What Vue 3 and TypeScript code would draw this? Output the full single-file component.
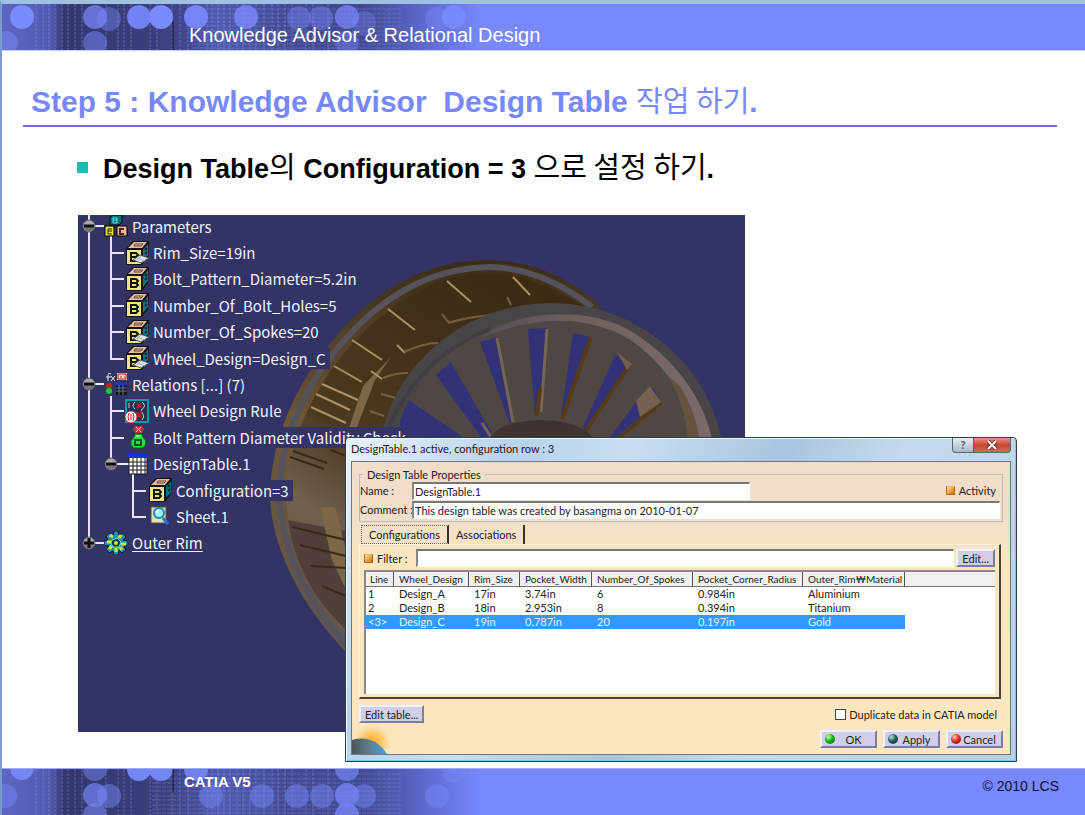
<script setup lang="ts">
import { ref } from 'vue'

type IconKind = 'params' | 'box' | 'boxTable' | 'relations' | 'rule' | 'check' | 'table' | 'sheet' | 'gear'
interface TreeItem {
  label: string
  icon: IconKind
  level: 0 | 1 | 2
  node?: 'minus' | 'plus'
  link?: boolean
}

const tree: TreeItem[] = [
  { label: 'Parameters', icon: 'params', level: 0, node: 'minus' },
  { label: 'Rim_Size=19in', icon: 'boxTable', level: 1 },
  { label: 'Bolt_Pattern_Diameter=5.2in', icon: 'box', level: 1 },
  { label: 'Number_Of_Bolt_Holes=5', icon: 'box', level: 1 },
  { label: 'Number_Of_Spokes=20', icon: 'boxTable', level: 1 },
  { label: 'Wheel_Design=Design_C', icon: 'boxTable', level: 1 },
  { label: 'Relations [...] (7)', icon: 'relations', level: 0, node: 'minus' },
  { label: 'Wheel Design Rule', icon: 'rule', level: 1 },
  { label: 'Bolt Pattern Diameter Validity Check', icon: 'check', level: 1 },
  { label: 'DesignTable.1', icon: 'table', level: 1, node: 'minus' },
  { label: 'Configuration=3', icon: 'box', level: 2 },
  { label: 'Sheet.1', icon: 'sheet', level: 2 },
  { label: 'Outer Rim', icon: 'gear', level: 0, node: 'plus', link: true },
]

const columns = ['Line', 'Wheel_Design', 'Rim_Size', 'Pocket_Width', 'Number_Of_Spokes', 'Pocket_Corner_Radius', 'Outer_Rim₩Material']
const rows = [
  ['1', 'Design_A', '17in', '3.74in', '6', '0.984in', 'Aluminium'],
  ['2', 'Design_B', '18in', '2.953in', '8', '0.394in', 'Titanium'],
  ['<3>', 'Design_C', '19in', '0.787in', '20', '0.197in', 'Gold'],
]
const selected = ref(2)
const name = ref('DesignTable.1')
const comment = ref('This design table was created by basangma on 2010-01-07')
const filter = ref('')
const active = ref(true)
const filterOn = ref(true)
const duplicate = ref(false)

const topDots = [[20, 13, 1], [93, 13, 0.7], [137, 13, 0.9], [159, 13, 1], [194, 13, 0.9], [244, 13, 0.8], [297, 14, 0.4], [319, 14, 0.4], [345, 13, 0.7], [452, 13, 0.9], [93, 39, 0.5], [4, 39, 0.5], [107, 15, 0.4], [362, 19, 0.3], [345, 39, 0.4], [435, 15, 0.4]]
const bottomDots = [[20, -1, 1], [93, 0, 0.5], [137, 0, 1], [159, 0, 1], [194, 0, 0.9], [345, 0, 0.7], [452, 2, 0.5], [93, 26, 0.7], [107, 27, 0.5], [3, 27, 0.5], [209, 27, 0.5], [260, 27, 0.5], [295, 27, 0.5], [320, 27, 0.5], [345, 26, 0.8], [362, 27, 0.5], [93, 46, 0.6], [345, 46, 0.8], [435, 27, 0.5]]
const gridX = [34, 41, 47, 53, 60, 66, 73, 80, 104, 116, 122, 129, 148, 155, 170, 178, 186, 205, 210, 216, 222, 228, 235, 241, 248, 254, 262, 270, 276, 283, 290, 304, 311, 326]
const gridY = [5, 10, 14, 18, 22, 27, 31, 36, 40, 44]

const spokeGaps = [
  '400,420 409,400 467,440 401,440', '436,375 451,362 496,440 483,440', '480,342 497,337 513,422 510,424',
  '528,329 547,328 539,412 535,416', '573,333 591,337 563,418 561,415', '615,355 631,364 586,432 583,427',
  '636,402 653,387 661,403 617,440 608,440',
]
</script>

<template>
  <div class="slide">
    <header class="bar top">
      <svg class="pattern" width="480" height="46" aria-hidden="true">
        <defs>
          <linearGradient id="fade">
            <stop offset="0" stop-color="#5c66c4" /><stop offset="0.1" stop-color="#535bb0" /><stop offset="0.13" stop-color="#33376c" />
            <stop offset="0.35" stop-color="#3c4180" /><stop offset="0.45" stop-color="#5059ac" /><stop offset="0.6" stop-color="#434990" />
            <stop offset="0.75" stop-color="#434990" /><stop offset="0.88" stop-color="#5d69cc" /><stop offset="1" stop-color="#7888fe" />
          </linearGradient>
        </defs>
        <rect width="480" height="46" fill="url(#fade)" />
        <path v-for="x in gridX" :key="'x' + x" :d="`M${x} 0V46`" stroke="#8c9af8" stroke-opacity=".45" stroke-dasharray="3 1" />
        <path v-for="y in gridY" :key="'y' + y" :d="`M190 ${y}H400`" stroke="#8c9af8" stroke-opacity=".35" stroke-dasharray="4 1" />
        <circle v-for="(d, i) in topDots" :key="i" :cx="d[0]" :cy="d[1]" r="12" fill="#7a8aff" :fill-opacity="d[2]" />
        <path d="M171 17V46" stroke="#10122c" />
      </svg>
      <p class="course">Knowledge Advisor &amp; Relational Design</p>
    </header>

    <main class="content">
      <h1>Step 5 : Knowledge Advisor&nbsp; Design Table <span class="ko">작업 하기</span>.</h1>
      <ul class="points">
        <li>Design Table<span class="ko">의</span> Configuration = 3 <span class="ko">으로 설정 하기</span>.</li>
      </ul>

      <section class="figure">
        <div class="viewport">
          <svg class="scene" viewBox="78 215 666 517" preserveAspectRatio="xMinYMin slice" aria-hidden="true">
            <defs>
              <linearGradient id="barrel" x1="0" y1="1" x2=".6" y2="0">
                <stop offset="0" stop-color="#665650" /><stop offset=".3" stop-color="#70604e" /><stop offset=".5" stop-color="#4c3a20" /><stop offset="1" stop-color="#3c2c14" />
              </linearGradient>
              <linearGradient id="lip" x1="0" y1="1" x2="0" y2="0">
                <stop offset="0" stop-color="#62544f" /><stop offset=".6" stop-color="#6c5638" /><stop offset="1" stop-color="#3c2c17" />
              </linearGradient>
              <linearGradient id="shine">
                <stop offset="0" stop-color="#55505a" /><stop offset=".5" stop-color="#71625f" /><stop offset="1" stop-color="#7b696a" />
              </linearGradient>
            </defs>
            <rect x="78" y="215" width="666" height="517" fill="#333366" />
            <path d="M348 654C310 615 274 560 270 500C270 435 300 375 345 326C385 285 430 260 490 260C540 262 575 282 600 306L560 440L500 660Z" fill="url(#lip)" />
            <path d="M348 646C308 604 284 555 279 500C279 435 310 375 353 331C391 291 436 268 490 267C530 268 565 286 592 307" fill="none" stroke="#55525c" stroke-width="6" />
            <path d="M348 637C315 600 291 555 286 500C286 440 318 378 359 337C397 298 440 274 490 273C525 274 555 288 584 306L560 440L500 640Z" fill="url(#barrel)" />
            <path d="M288 520L346 531V630C310 596 294 560 288 520Z" fill="#51403a" />
            <path d="M391 357L375 380L352 440H345L363 386ZM320 507H335L346 550V590L332 560Z" fill="#7d6748" />
            <path d="M293 451L327 463M290 457L324 469M331 450L346 456M292 527L346 540M300 545L346 556M310 566L346 568M322 586L346 596" stroke="#39291a" stroke-width="2" fill="none" />
            <path d="M316 394L350 410M311 407L346 423M322 384L358 400M447 281L471 302M388 309L415 330M352 340L382 360M513 277L530 295M397 345L405 353M371 371L382 379M334 366L362 382" stroke="#aa9169" stroke-width="2" fill="none" />
            <path d="M404 352Q424 343 438 343M383 378Q395 373 408 373M448 323Q475 315 500 315M442 314L449 323M381 394L396 398M370 411L384 416M507 297L511 305" stroke="#77603c" stroke-width="2" fill="none" />
            <ellipse cx="551" cy="472" rx="174" ry="169" fill="#494448" />
            <ellipse cx="551" cy="476" rx="160" ry="161" fill="#4e4744" />
            <path d="M480 338C515 310 590 305 634 333C674 358 705 400 712 440H698C690 402 665 363 629 339C585 314 535 316 480 338Z" fill="url(#shine)" />
            <path d="M667 375L680 386Q695 410 700 440H688Q684 400 667 375Z" fill="#65513f" />
            <path d="M385 440C398 395 435 350 490 329" fill="none" stroke="#423d43" stroke-width="4" />
            <polygon v-for="points in spokeGaps" :key="points" :points="points" fill="#333278" />
            <path d="M547 329L541 412M497 338L513 422M482 423L491 437" stroke="#75674f" stroke-width="3" />
            <path d="M591 337L562 419M630 364L586 431M661 403L617 439M540 388L537 415" stroke="#563b16" stroke-width="4" />
            <path d="M617 352L632 364L627 370ZM636 401L650 386L661 402L640 417Z" fill="#75614f" />
            <ellipse cx="541" cy="442" rx="52" ry="22" fill="#3d3431" />
            <g stroke="#e8e8f2" stroke-width="2" fill="none">
              <path d="M89 215V543M89 226H104M111 236V359H124M111 253H124M111 279H124M111 306H124M111 332H124M89 384H104M111 396V464H130M111 411H124M111 438H124M133 474V517H146M133 491H146M89 543H104" />
            </g>
          </svg>
          <ul class="tree">
            <li v-for="item in tree" :key="item.label" :class="['level' + item.level, { expandable: item.node }]">
              <button v-if="item.node" class="node" type="button" :aria-label="'Toggle ' + item.label">
                <svg width="14" height="14" viewBox="0 0 14 14">
                  <circle cx="7" cy="7" r="6" fill="#aaa" stroke="#5e5e64" />
                  <path d="M2 8A5 5 0 0 0 12 8Z" fill="#777" />
                  <path d="M2 7H12" stroke="#111" stroke-width="3" />
                  <path v-if="item.node === 'plus'" d="M7 2V12" stroke="#111" stroke-width="3" />
                </svg>
              </button>
              <svg class="icon" width="24" height="24" viewBox="0 0 24 24" aria-hidden="true">
                <g v-if="item.icon === 'params'">
                  <path d="M6 3L9 1H18V8L15 11H6Z" fill="#087078" stroke="#000" /><path d="M9 4H13V9H9ZM9 6H13" fill="none" stroke="#60e0e0" />
                  <path d="M1 12H10V22H1Z" fill="#e6d83e" stroke="#000" /><path d="M4 15V20M4 15H8M4 17H8M4 20H8" stroke="#222" fill="none" />
                  <path d="M13 12H23V22H13Z" fill="#e9b79d" stroke="#000" /><path d="M20 15H16V20H20" stroke="#602016" stroke-width="2" fill="none" />
                </g>
                <g v-else-if="item.icon === 'box' || item.icon === 'boxTable'">
                  <path d="M1 8L8 0H24L23 16L17 24H1Z" fill="#111" />
                  <path d="M3 7L9 1H22L17 7Z" fill="#e7bb9d" /><path d="M10 3H18L16 5H9Z" fill="none" stroke="#63443a" />
                  <path d="M18 9L23 3V14L18 20Z" fill="#087780" /><path d="M20 9L22 7M20 13L22 11" stroke="#082c38" stroke-width="2" />
                  <path d="M2 9H16V23H2Z" fill="#f0e57e" />
                  <path d="M6 12V20M5 12H11L13 14L11 16L13 18L11 20H5M6 16H11" fill="none" stroke="#111" stroke-width="2" />
                  <g v-if="item.icon === 'boxTable'"><path d="M8 19L15 14L24 17L16 22Z" fill="#dce3e8" stroke="#555" /><path d="M12 17L20 20M16 15L12 19" stroke="#a8b2b8" /></g>
                </g>
                <g v-else-if="item.icon === 'relations'">
                  <path d="M7 2Q4 0 4 4V9M2 5H7M7 4L11 9M11 4L7 9" fill="none" stroke="#ececf4" />
                  <path d="M13 1H23V8H13Z" fill="#e8ddd8" /><path d="M14 2H22V7H14ZM16 5H18M20 5H21" stroke="#b4201e" fill="none" />
                  <circle cx="5" cy="14" r="3" fill="#d41a22" /><circle cx="5" cy="19" r="3" fill="#22c936" />
                  <path d="M12 11H23V23H12Z" fill="#12141e" /><path d="M12 12H23" stroke="#1438c8" stroke-width="3" /><path d="M12 16H23M12 19H23M15 13V23M19 13V23" stroke="#68729c" />
                </g>
                <g v-else-if="item.icon === 'rule'">
                  <path d="M1 1H23V23H1Z" fill="#263054" stroke="#0c9aa8" stroke-width="2" />
                  <path d="M4 4V9M10 3Q6 7 10 10M17 3Q22 7 17 10Q15 12 18 15Q20 18 17 21" fill="none" stroke="#c8c8db" /><path d="M12 4L16 9M16 4L12 9M12 13L16 19M17 12L13 18" stroke="#b61d26" stroke-width="2" />
                  <circle cx="6" cy="18" r="6" fill="#fff" stroke="#cf2b2b" /><path d="M4 14Q2 18 4 22M8 14Q10 18 8 22M6 15V21" fill="none" stroke="#bb1720" />
                </g>
                <g v-else-if="item.icon === 'check'">
                  <path d="M10 1H17L19 4L17 8H10L8 4Z" fill="#b53636" /><path d="M11 2L16 7M16 2L11 7" stroke="#efc5b4" />
                  <path d="M10 9H17L18 12L21 16L20 21L17 23H9L6 20V16L9 12Z" fill="#27df42" stroke="#07651c" /><path d="M10 15H16V20H10Z" fill="none" stroke="#0b541c" stroke-width="2" /><path d="M11 11H16" stroke="#b9ffae" />
                </g>
                <g v-else-if="item.icon === 'table'">
                  <path d="M4 3H22V22H4Z" fill="#fff" stroke="#181820" /><path d="M3 4H23" stroke="#1230dc" stroke-width="4" /><path d="M4 10H22M4 14H22M4 18H22M8 6V22M12 6V22M16 6V22M20 6V22" stroke="#181820" />
                </g>
                <g v-else-if="item.icon === 'sheet'">
                  <path d="M3 3H18V19H3Z" fill="#e4dcae" stroke="#54524a" /><circle cx="11" cy="9" r="5" fill="#a5ecfa" stroke="#1588b8" stroke-width="2" /><path d="M15 14L20 20" stroke="#2175d0" stroke-width="3" /><path d="M8 8L11 6" stroke="#fff" stroke-width="2" />
                </g>
                <g v-else>
                  <path d="M10 0H14L15 4L19 2L22 6L19 9L24 10V14L20 15L22 19L18 22L15 19L14 24H10L9 20L5 22L2 18L5 15L0 14V10L4 9L2 5L6 2L9 5Z" fill="#1594ae" stroke="#081e30" />
                  <path d="M6 4L9 6M17 4L15 7M3 11H7M17 13H22M5 18L8 15M12 21V17M18 19L16 16" stroke="#d9e438" stroke-width="3" /><path d="M8 9L13 7L17 11L15 16L9 16L7 12Z" fill="#0b3a4c" stroke="#6ee8e4" /><circle cx="12" cy="12" r="2" fill="#e2db4b" />
                </g>
              </svg>
              <a v-if="item.link" class="label" href="#outer-rim">{{ item.label }}</a>
              <span v-else class="label">{{ item.label }}</span>
            </li>
          </ul>
        </div>

        <form class="dialog" aria-label="Design table" @submit.prevent>
          <div class="titlebar">
            <span>DesignTable.1 active, configuration row : 3</span>
            <div class="window-buttons">
              <button class="help" type="button" aria-label="Help">?</button>
              <button class="close" type="button" aria-label="Close">
                <svg width="12" height="10" viewBox="0 0 12 10"><path d="M2 1L10 9M10 1L2 9" stroke="#5f3638" stroke-width="4" /><path d="M2 1L10 9M10 1L2 9" stroke="#fff" stroke-width="2" /></svg>
              </button>
            </div>
          </div>
          <div class="body">
            <fieldset>
              <legend>Design Table Properties</legend>
              <div class="field"><label for="name">Name :</label><input id="name" v-model="name" class="text short" type="text" />
                <label class="tick activity"><input v-model="active" class="led" type="checkbox" />Activity</label></div>
              <div class="field"><label for="comment">Comment :</label><input id="comment" v-model="comment" class="text" type="text" /></div>
            </fieldset>
            <div class="tabs" role="tablist">
              <button class="tab current" type="button" role="tab" aria-selected="true">Configurations</button>
              <button class="tab" type="button" role="tab" aria-selected="false">Associations</button>
            </div>
            <div class="panel">
              <div class="filter">
                <input id="filterOn" v-model="filterOn" class="led" type="checkbox" aria-label="Use filter" />
                <label for="filter">Filter :</label>
                <input id="filter" v-model="filter" class="text" type="text" />
                <button class="push" type="button">Edit...</button>
              </div>
              <div class="list">
                <table>
                  <colgroup><col v-for="(c, i) in columns" :key="c" :class="'c' + i" /><col /></colgroup>
                  <thead><tr><th v-for="c in columns" :key="c" scope="col">{{ c }}</th><td></td></tr></thead>
                  <tbody>
                    <tr v-for="(row, r) in rows" :key="r" :class="{ selected: r === selected }" @click="selected = r">
                      <td v-for="(cell, c) in row" :key="c">{{ cell }}</td><td></td>
                    </tr>
                  </tbody>
                </table>
              </div>
            </div>
            <div class="options">
              <button class="push edit-table" type="button">Edit table...</button>
              <label class="tick"><input v-model="duplicate" class="square" type="checkbox" />Duplicate data in CATIA model</label>
            </div>
            <div class="actions">
              <button class="push action" type="submit"><i class="ball green"></i><span>OK</span></button>
              <button class="push action" type="button"><i class="ball teal"></i><span>Apply</span></button>
              <button class="push action" type="button"><i class="ball red"></i><span>Cancel</span></button>
            </div>
            <svg class="globe" width="44" height="32" viewBox="0 0 44 32" aria-hidden="true">
              <defs>
                <radialGradient id="glow"><stop offset="0" stop-color="#ffa91f" /><stop offset=".5" stop-color="#ffc45c" stop-opacity=".8" /><stop offset="1" stop-color="#fbe5bf" stop-opacity="0" /></radialGradient>
                <linearGradient id="earth"><stop offset="0" stop-color="#4d5558" /><stop offset=".55" stop-color="#5e8194" /><stop offset="1" stop-color="#3ca6dc" /></linearGradient>
              </defs>
              <ellipse cx="20" cy="20" rx="22" ry="20" fill="url(#glow)" />
              <path d="M0 18Q22 12 35 32H0Z" fill="url(#earth)" />
            </svg>
          </div>
        </form>
      </section>
    </main>

    <footer class="bar bottom">
      <svg class="pattern" width="480" height="47" aria-hidden="true">
        <rect width="480" height="47" fill="url(#fade)" />
        <path v-for="x in gridX" :key="'x' + x" :d="`M${x} 0V47`" stroke="#8c9af8" stroke-opacity=".4" stroke-dasharray="3 1" />
        <path v-for="y in gridY" :key="'y' + y" :d="`M150 ${y}H400`" stroke="#8c9af8" stroke-opacity=".35" stroke-dasharray="4 1" />
        <circle v-for="(d, i) in bottomDots" :key="i" :cx="d[0]" :cy="d[1]" r="12" fill="#7485f4" :fill-opacity="d[2]" />
        <path d="M171 0V23" stroke="#10122c" />
      </svg>
      <strong>CATIA V5</strong>
      <span class="copyright">© 2010 LCS</span>
    </footer>
  </div>
</template>

<style>
body { margin: 0; background: #fff; }
</style>

<style scoped>
* { box-sizing: border-box; }
.slide {
  min-height: 100vh; display: flex; flex-direction: column; border-left: 2px solid #7c9bcd; border-top: 4px solid #a0c0e0;
  background: #fff; font-family: "Liberation Sans", "Noto Sans CJK KR", sans-serif; color: #000;
}
.bar { position: relative; display: flex; background: #7888fe; color: #fff; }
.top { height: 47px; border-bottom: 1px solid #c5ccff; }
.bottom { height: 47px; border-top: 1px solid #a0acff; padding: 4px 26px 0 182px; justify-content: space-between; }
.pattern { position: absolute; left: 0; top: 0; }
.course { position: relative; margin: 0; padding: 19px 0 0 187px; font-size: 20px; line-height: 24px; }
.bottom strong { position: relative; font-size: 15px; line-height: 18px; }
.copyright { color: #10122c; font-size: 14px; line-height: 26px; }
.content { flex: 1; display: flex; flex-direction: column; }
h1 {
  margin: 31px 28px 0 21px; padding: 0 8px 3px; border-bottom: 2px solid #6f6be8; color: #7788f8;
  font-size: 30px; line-height: 40px; white-space: pre;
}
.ko { font-family: "Noto Sans CJK KR", sans-serif; font-weight: 400; font-size: 29px; line-height: 0; }
.points { list-style: none; margin: 22px 28px 0 75px; padding: 0; font-size: 27px; line-height: 40px; font-weight: 700; white-space: pre; }
.points li::before { content: ""; display: inline-block; width: 11px; height: 11px; margin: 0 15px 7px 0; vertical-align: middle; background: #2ab5b0; }
.figure { position: relative; margin: 26px 68px 36px 76px; }
.viewport { position: relative; width: 71%; height: 517px; overflow: hidden; background: #333366; }
.scene { position: absolute; left: 0; top: 0; width: 666px; height: 517px; }
.tree {
  position: relative; display: grid; grid-template-rows: repeat(13, 1fr); height: 343px; margin: -2px 0 0; padding: 0; list-style: none;
  font: 15px/21px "Noto Sans CJK KR", sans-serif; color: #f2f2f8;
}
.tree li { display: flex; align-items: center; white-space: pre; }
.level0 { padding-left: 26px; }
.level1 { padding-left: 47px; }
.level2 { padding-left: 70px; }
.level0.expandable { padding-left: 4px; }
.level1.expandable { padding-left: 26px; }
.level0 .icon { margin-left: 8px; }
.level1.expandable .icon { margin-left: 7px; }
.node { width: 14px; height: 14px; padding: 0; border: 0; background: none; }
.node svg { display: block; }
.icon { flex: none; }
.label { padding: 0 4px; background: #333366; color: #f2f2f8; text-underline-offset: 2px; }
.dialog {
  position: absolute; left: 267px; right: 0; top: 222px; padding: 0 5px 6px; border: 1px solid #27414c; border-radius: 4px 4px 0 0;
  background: linear-gradient(120deg, #e9f3fc, #b7d2ea 20%, #c8def2 34%, #a8c4de 52%, #c4daee 66%, #b7cfe9);
  box-shadow: inset 1px 1px #eefaff, inset -1px -1px #63d4ea; font: 11px/13px Lato, "Noto Sans CJK KR", sans-serif; color: #222;
}
.dialog button, .dialog input { font: inherit; color: inherit; }
.titlebar { display: flex; justify-content: space-between; height: 23px; line-height: 22px; }
.window-buttons { display: flex; height: 15px; }
.window-buttons button { display: flex; align-items: center; justify-content: center; padding: 0; border: 1px solid #58636e; border-top: 0; }
.window-buttons .help { width: 22px; border-radius: 0 0 0 4px; background: linear-gradient(#e5edf3, #a8b8c5); font-weight: 700; color: #555; }
.window-buttons .close { width: 37px; border-left: 0; border-radius: 0 0 4px 0; background: linear-gradient(#e09b8d, #c6452c 50%, #d8694f); }
.body {
  position: relative; display: flex; flex-direction: column; border: 1px solid #6f7882; padding: 6px 7px;
  background: linear-gradient(#f0dcc8, #f1dfca 20%, #fbe6bf 35%, #fbe6bf);
}
fieldset { margin: 0; padding: 0 2px 2px 0; min-width: 0; border: 1px solid #bcb9bb; }
legend { margin-left: 3px; padding: 0 4px; }
.field { display: flex; align-items: center; height: 19px; }
.field > label:first-child { width: 52px; flex: none; white-space: nowrap; }
.text { flex: 1; min-width: 0; height: 18px; padding: 0 1px; border: 1px solid #fff; border-top: 2px solid #777; border-left: 2px solid #888; background: #fff; outline: 0; }
.text.short { flex: 0 0 338px; }
.tick { display: flex; align-items: center; }
.activity { margin-left: auto; padding-right: 4px; }
input[type="checkbox"] { appearance: none; margin: 0; flex: none; }
.led { width: 9px; height: 9px; margin-right: 4px !important; border: 1px solid #b76a22; border-top-color: #edb475; background: linear-gradient(135deg, #ffe6b0, #ef9a30 60%, #c86a10); }
.square { width: 11px; height: 11px; margin-right: 3px !important; border: 1px solid #444; background: #fff; }
.tabs { display: flex; height: 19px; margin-top: 3px; padding-left: 2px; }
.tab { padding: 0 7px; border: 0; border-right: 2px solid #333; background: none; }
.tab.current { border: 1px dotted #666; border-right: 2px solid #333; }
.panel { border: 1px solid #fff2da; border-right: 2px solid #444; border-bottom: 2px solid #444; padding: 2px 4px 3px; margin-right: 2px; }
.filter { display: flex; align-items: center; height: 22px; }
.filter label { width: 39px; }
.push { height: 18px; padding: 0 4px; border: 2px solid; border-color: #f0effb #7c7ba5 #7c7ba5 #f0effb; background: #cfcfe9; line-height: 13px; }
.filter .push { margin-left: 2px; }
.list { height: 124px; margin-top: 1px; border-top: 2px solid #888; border-left: 2px solid #888; background: #fff; overflow: hidden; }
table { width: 100%; border-collapse: separate; border-spacing: 0; table-layout: fixed; }
.c0 { width: 28px; } .c1 { width: 75px; } .c2 { width: 51px; } .c3 { width: 72px; } .c4 { width: 101px; } .c5 { width: 110px; } .c6 { width: 102px; }
th, td { height: 14px; padding: 0 0 0 5px; text-align: left; font-weight: 400; line-height: 14px; white-space: nowrap; }
th:first-child { padding-left: 4px; }
td:first-child { padding-left: 2px; }
thead th, thead td { height: 15px; background: #f0f0f0; border-bottom: 1px solid #777; }
th { border-right: 1px solid #555; font-size: 10px; }
.selected td:not(:last-child) { background: #3399ff; color: #e4f2ff; }
.options { display: flex; justify-content: space-between; align-items: center; margin-top: 6px; padding-right: 6px; }
.actions { display: flex; justify-content: flex-end; gap: 6px; margin-top: 7px; }
.action { display: flex; align-items: center; width: 57px; padding: 0 3px; }
.action span { flex: 1; text-align: center; }
.ball { width: 10px; height: 10px; border-radius: 50%; }
.green { background: radial-gradient(circle at 35% 30%, #bfffb0, #18b318 45%, #066006); }
.teal { background: radial-gradient(circle at 35% 30%, #b8e0dc, #205e60 45%, #0b2c30); }
.red { background: radial-gradient(circle at 35% 30%, #ffc9bd, #e22b20 45%, #560808); }
.globe { position: absolute; left: 0; bottom: 0; }
</style>
